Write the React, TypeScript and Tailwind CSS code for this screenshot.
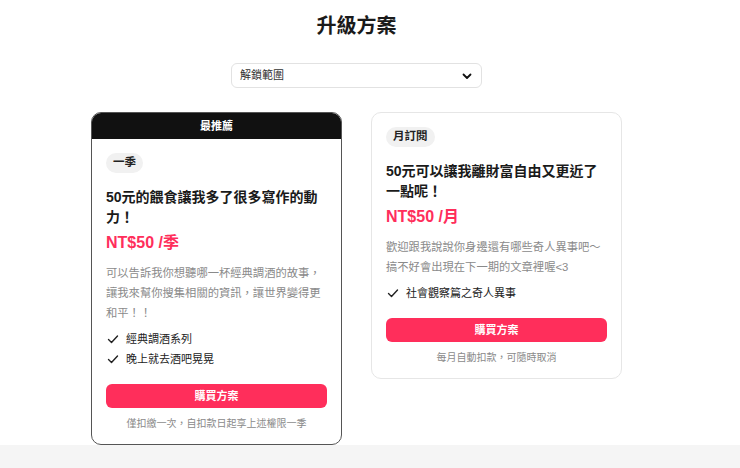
import React from "react";

const FONT = "font-['Liberation_Sans','Noto_Sans_CJK_TC',sans-serif]";

function Check() {
  return (
    <svg width="12" height="12" viewBox="0 0 12 12" className="shrink-0">
      <path d="M1.5 6.5 L4.5 9.5 L10.5 3" fill="none" stroke="#222" strokeWidth="1.4" strokeLinecap="round" strokeLinejoin="round" />
    </svg>
  );
}

type Plan = {
  tag: string;
  title: string;
  price: string;
  desc: string;
  items: string[];
  note: string;
  featured?: boolean;
};

function Card({ plan }: { plan: Plan }) {
  return (
    <div
      className={
        "w-[251px] rounded-[10px] border bg-white overflow-hidden " +
        (plan.featured ? "border-[#555555]" : "border-[#e6e6e6]")
      }
    >
      {plan.featured && (
        <div className="h-[26px] bg-[#111111] flex items-center justify-center text-white text-[11px] font-bold">
          最推薦
        </div>
      )}
      <div className="px-[14px] pt-[14px] pb-[12px] flex flex-col">
        <div className="self-start h-[20px] px-[7px] rounded-full bg-[#f1f1f1] flex items-center text-[11.5px] font-bold text-[#222]">
          {plan.tag}
        </div>
        <div className="mt-[14px] text-[14px] leading-[20px] font-bold text-[#1a1a1a]">{plan.title}</div>
        <div className="mt-[4px] text-[16px] leading-[24px] font-bold text-[#ff2e5b]">{plan.price}</div>
        <div className="mt-[8px] text-[11.3px] leading-[20px] text-[#8a8a8a]">{plan.desc}</div>
        <div className="mt-[6px] flex flex-col">
          {plan.items.map((it) => (
            <div key={it} className="flex items-center gap-[7px] h-[20px] text-[11px] text-[#222] pl-[1px]">
              <Check />
              <span>{it}</span>
            </div>
          ))}
        </div>
        <button className="mt-[15px] h-[24px] w-full rounded-[6px] bg-[#ff2e5b] text-white text-[11px] font-bold flex items-center justify-center">
          購買方案
        </button>
        <div className="mt-[8px] text-[10px] leading-[16px] text-[#8a8a8a] text-center">{plan.note}</div>
      </div>
    </div>
  );
}

export default function App() {
  const plans: Plan[] = [
    {
      tag: "一季",
      title: "50元的餵食讓我多了很多寫作的動力！",
      price: "NT$50 /季",
      desc: "可以告訴我你想聽哪一杯經典調酒的故事，讓我來幫你搜集相關的資訊，讓世界變得更和平！！",
      items: ["經典調酒系列", "晚上就去酒吧晃晃"],
      note: "僅扣繳一次，自扣款日起享上述權限一季",
      featured: true,
    },
    {
      tag: "月訂閱",
      title: "50元可以讓我離財富自由又更近了一點呢！",
      price: "NT$50 /月",
      desc: "歡迎跟我說說你身邊還有哪些奇人異事吧～搞不好會出現在下一期的文章裡喔<3",
      items: ["社會觀察篇之奇人異事"],
      note: "每月自動扣款，可隨時取消",
    },
  ];
  return (
    <div className={"min-h-screen bg-[#f5f5f5] " + FONT}>
      <div className="h-[445px] bg-white">
        <div className="w-[713px] flex flex-col items-center">
          <h1 className="pt-[12px] text-[20px] leading-[28px] font-bold text-[#1a1a1a]">升級方案</h1>
          <div className="mt-[23px] w-[251px] h-[25px] rounded-[6px] border border-[#e2e2e2] flex items-center justify-between pl-[8px] pr-[9px]">
            <span className="text-[11px] text-[#333]">解鎖範圍</span>
            <svg width="10" height="10" viewBox="0 0 10 10">
              <path d="M1.5 3.5 L5 7 L8.5 3.5" fill="none" stroke="#111" strokeWidth="1.8" strokeLinecap="round" strokeLinejoin="round" />
            </svg>
          </div>
          <div className="mt-[24px] flex items-start gap-[29px]">
            {plans.map((p) => (
              <Card key={p.tag} plan={p} />
            ))}
          </div>
        </div>
      </div>
    </div>
  );
}
